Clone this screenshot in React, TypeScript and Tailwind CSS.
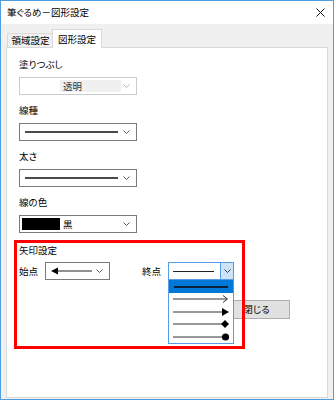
import React from "react";

const FONT = "font-['Noto_Sans_CJK_JP','Noto_Sans',sans-serif] [font-feature-settings:'palt']";

function Chevron({ color = "#5a5a5a" }: { color?: string }) {
  return (
    <svg width="7" height="4" viewBox="0 0 7 4" className="shrink-0">
      <path d="M0.5 0.5 L3.5 3.5 L6.5 0.5" fill="none" stroke={color} strokeWidth="1" />
    </svg>
  );
}

function LineCombo() {
  return (
    <div className="flex h-[18px] w-[118px] items-center border border-[#7a7a7a] bg-white pl-[5px] pr-[3px]">
      <div className="h-[2px] w-[93px] bg-[#4a4a4a]" />
      <div className="flex flex-1 justify-end pr-[3px]">
        <Chevron />
      </div>
    </div>
  );
}

// 矢印の種類（ドロップダウン項目）
function ArrowLine({ kind, color = "#333" }: { kind: "none" | "open" | "tri" | "diamond" | "dot"; color?: string }) {
  return (
    <svg width="58" height="10" viewBox="0 0 58 10">
      <line x1="1" y1="5" x2="55" y2="5" stroke={color} strokeWidth={kind === "none" ? 2 : 1} />
      {kind === "open" && <path d="M51 1.5 L55.5 5 L51 8.5" fill="none" stroke={color} strokeWidth="1" />}
      {kind === "tri" && <path d="M50 1 L57 5 L50 9 Z" fill="#000" />}
      {kind === "diamond" && <path d="M53 1 L57 5 L53 9 L49 5 Z" fill="#000" />}
      {kind === "dot" && <circle cx="53.5" cy="5" r="3.6" fill="#000" />}
    </svg>
  );
}

export default function App() {
  return (
    <div className={`flex h-[400px] w-[334px] flex-col border border-[#4f9fe0] bg-[#f0f0f0] text-[9.5px] text-black ${FONT}`}>
      {/* タイトルバー */}
      <div className="flex h-[23px] shrink-0 items-center justify-between bg-white pl-[6px] pr-[8px]">
        <span className="leading-none">筆ぐるめ－図形設定</span>
        <svg width="9" height="9" viewBox="0 0 9 9">
          <path d="M0.5 0.5 L8.5 8.5 M8.5 0.5 L0.5 8.5" stroke="#111" strokeWidth="1" />
        </svg>
      </div>

      <div className="flex flex-1 flex-col pb-[1px] pl-[5px] pr-[5px] pt-[5px]">
        {/* タブ */}
        <div className="flex h-[18px] items-end pl-[1px]">
          <div className="flex h-[14px] w-[45px] items-center justify-center border-l border-t border-[#d9d9d9] bg-[#f0f0f0] pl-[1px]">
            領域設定
          </div>
          <div className="relative z-10 -mb-px flex h-[19px] w-[50px] items-start justify-center border-l border-r border-t border-[#d9d9d9] bg-white pt-[2px]">
            図形設定
          </div>
        </div>

        {/* パネル */}
        <div className="relative flex-1 border border-[#d9d9d9] bg-white pl-[12px] pt-[8px]">
          <div className="h-[16px] leading-[16px]">塗りつぶし</div>
          <div className="mt-[5px] flex h-[18px] w-[118px] items-center border border-[#cccccc] bg-white pl-[2px] pr-[3px]">
            <div className="h-[12px] w-[38px] bg-white" />
            <div className="flex h-[12px] w-[61px] items-center bg-[#f0f0f0] pl-[3px] text-[#333]">透明</div>
            <div className="flex flex-1 justify-end pr-[3px]">
              <Chevron color="#b5b5b5" />
            </div>
          </div>

          <div className="mt-[7px] h-[16px] leading-[16px]">線種</div>
          <div className="mt-[5px]">
            <LineCombo />
          </div>

          <div className="mt-[7px] h-[16px] leading-[16px]">太さ</div>
          <div className="mt-[5px]">
            <LineCombo />
          </div>

          <div className="mt-[7px] h-[16px] leading-[16px]">線の色</div>
          <div className="mt-[5px] flex h-[18px] w-[118px] items-center border border-[#7a7a7a] bg-white pl-[2px] pr-[3px]">
            <div className="h-[12px] w-[38px] bg-black" />
            <span className="ml-[3px]">黒</span>
            <div className="flex flex-1 justify-end pr-[3px]">
              <Chevron />
            </div>
          </div>

          {/* 矢印設定 */}
          <div className="mt-[9px] h-[16px] leading-[16px]">矢印設定</div>
          <div className="mt-[4px] flex h-[18px] items-center">
            <span className="w-[26px]">始点</span>
            <div className="flex h-[18px] w-[65px] items-center border border-[#7a7a7a] bg-white pl-[4px] pr-[3px]">
              <svg width="42" height="8" viewBox="0 0 42 8">
                <path d="M1 4 L8 0.5 L8 7.5 Z" fill="#000" />
                <line x1="7" y1="4" x2="42" y2="4" stroke="#222" strokeWidth="1" />
              </svg>
              <div className="flex flex-1 justify-end pr-[3px]">
                <Chevron />
              </div>
            </div>
            <span className="ml-[32px] w-[26px]">終点</span>
            <div className="relative z-30 h-[18px] w-[66px]">
              <div className="flex h-full items-center border border-[#569de5] bg-white pl-[4px]">
                <div className="h-px w-[41px] bg-[#222]" />
                <div className="ml-auto flex h-full w-[13px] items-center justify-center border-l border-[#569de5] bg-[#cce4f7]">
                  <Chevron color="#3d3d3d" />
                </div>
              </div>
              {/* ドロップダウン一覧 */}
              <div className="absolute left-0 top-full w-[66px] border-x border-b border-[#569de5] bg-white">
                <div className="flex h-[13px] items-center bg-[#0078d7] pl-[4px]">
                  <ArrowLine kind="none" color="#0b2038" />
                </div>
                <div className="flex h-[12.5px] items-center pl-[3px]">
                  <ArrowLine kind="open" />
                </div>
                <div className="flex h-[12.5px] items-center pl-[3px]">
                  <ArrowLine kind="tri" />
                </div>
                <div className="flex h-[12.5px] items-center pl-[3px]">
                  <ArrowLine kind="diamond" />
                </div>
                <div className="flex h-[12.5px] items-center pl-[3px]">
                  <ArrowLine kind="dot" />
                </div>
              </div>
            </div>
          </div>

          <div className="mt-[20px] flex justify-end pr-[37px]">
            <button className="flex h-[19px] w-[67px] items-center justify-center border border-[#adadad] bg-[#e1e1e1]">
              閉じる
            </button>
          </div>

          {/* 注目枠 */}
          <div className="absolute left-[7px] top-[192px] z-20 h-[109px] w-[231px] border-[3px] border-[#ff0000]" />
        </div>
      </div>
    </div>
  );
}
